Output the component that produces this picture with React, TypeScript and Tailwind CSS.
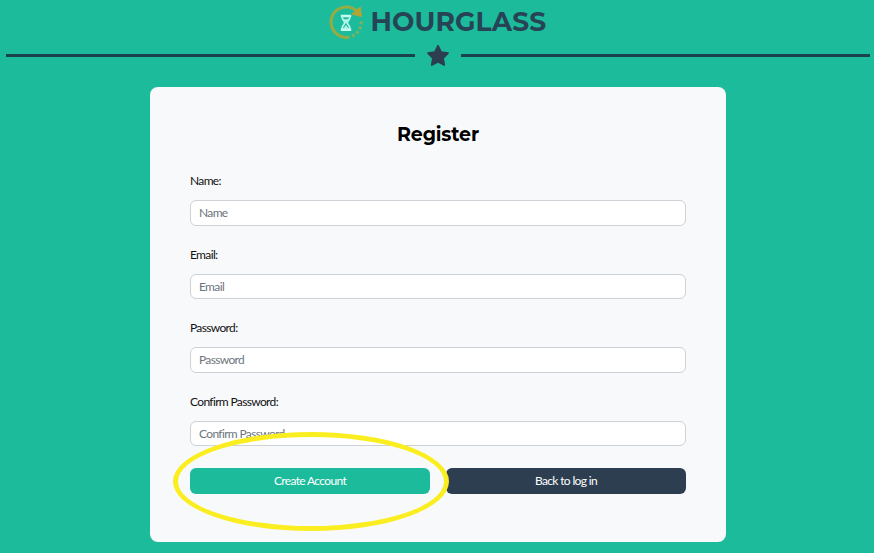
const fields = ["Name", "Email", "Password", "Confirm Password"];

function Logo() {
  return (
    <svg width="36" height="36" viewBox="0 0 36 36" fill="none" className="shrink-0">
      <path d="M29.5 8 A15.2 15.2 0 1 0 21.5 33" stroke="#97ab43" strokeWidth="3" />
      <path d="M24 32.2 A15.2 15.2 0 0 0 33.2 17" stroke="#7fb25a" strokeWidth="3" strokeDasharray="3 2.2" />
      <path d="M23.8 10 L32.4 3 L33.6 12.6 Z" fill="#aea536" stroke="#aea536" />
      <path d="M12.8 12 H23.2 M12.8 25.6 H23.2" stroke="#c5fbf0" strokeWidth="2.6" />
      <path d="M14.4 12 V14.5 L17 18.7 L14.4 22.7 V25 M21.6 12 V14.5 L19 18.7 L21.6 22.7 V25" stroke="#b5f5ea" strokeWidth="1.8" />
      <path d="M15.5 15.2 H20.5 L18 19 Z M18 21 L20.5 24.5 H15.5 Z" fill="#b5f5ea" />
    </svg>
  );
}

export default function App() {
  return (
    <div className="h-[553px] w-full overflow-hidden bg-[#1cbb9c] font-[Lato,sans-serif] text-[12px] tracking-[-0.65px] text-[#111]">
      <header className="flex h-[44px] items-center pl-[328px]">
        <Logo />
        <h1 className="ml-[6.5px] whitespace-nowrap font-[Montserrat,Inter,sans-serif] text-[26.5px] leading-[44px] font-bold tracking-[0.1px] text-[#264456]">
          HOURGLASS
        </h1>
      </header>
      <div className="flex h-[23px] items-center gap-[11px] pr-1 pl-1.5">
        <div className="h-[3px] w-[409px] bg-[#1b434f]" />
        <svg width="24" height="24" viewBox="0 0 24 24" className="shrink-0">
          <path
            d="M12 1.8 L15.1 8.1 L22 9.1 L17 14 L18.2 21 L12 17.7 L5.8 21 L7 14 L2 9.1 L8.9 8.1 Z"
            fill="#2c3e50"
            stroke="#2c3e50"
            strokeWidth="1.8"
            strokeLinejoin="round"
          />
        </svg>
        <div className="h-[3px] flex-1 bg-[#1b434f]" />
      </div>
      <main className="relative mt-5 ml-[150px] h-[455px] w-[576px] rounded-lg bg-[#f8f9fb] px-10 pt-[35px]">
        <h2 className="flex h-[26px] items-center justify-center font-[Montserrat,Inter,sans-serif] text-[19px] font-bold tracking-[-0.15px] text-black">
          Register
        </h2>
        <form className="mt-6">
          {fields.map((name) => (
            <div key={name} className="h-[73.6px]">
              <label className="block h-[18px] leading-[18px]">{name}:</label>
              <input
                placeholder={name}
                className="mt-2.5 block h-[25.6px] w-full rounded-md border border-[#ced1d6] bg-white px-2 placeholder:text-[#6c757d]"
              />
            </div>
          ))}
          <div className="mt-[1.6px] flex gap-4 text-white">
            <button type="button" className="h-[26px] flex-1 rounded-md bg-[#1cbb9c]">
              Create Account
            </button>
            <button type="button" className="h-[26px] flex-1 rounded-md bg-[#2c3e50]">
              Back to log in
            </button>
          </div>
        </form>
        <div className="absolute top-[345px] left-[23px] h-[99px] w-[276px] rounded-[50%] border-[5px] border-[#fbee20]" />
      </main>
    </div>
  );
}
